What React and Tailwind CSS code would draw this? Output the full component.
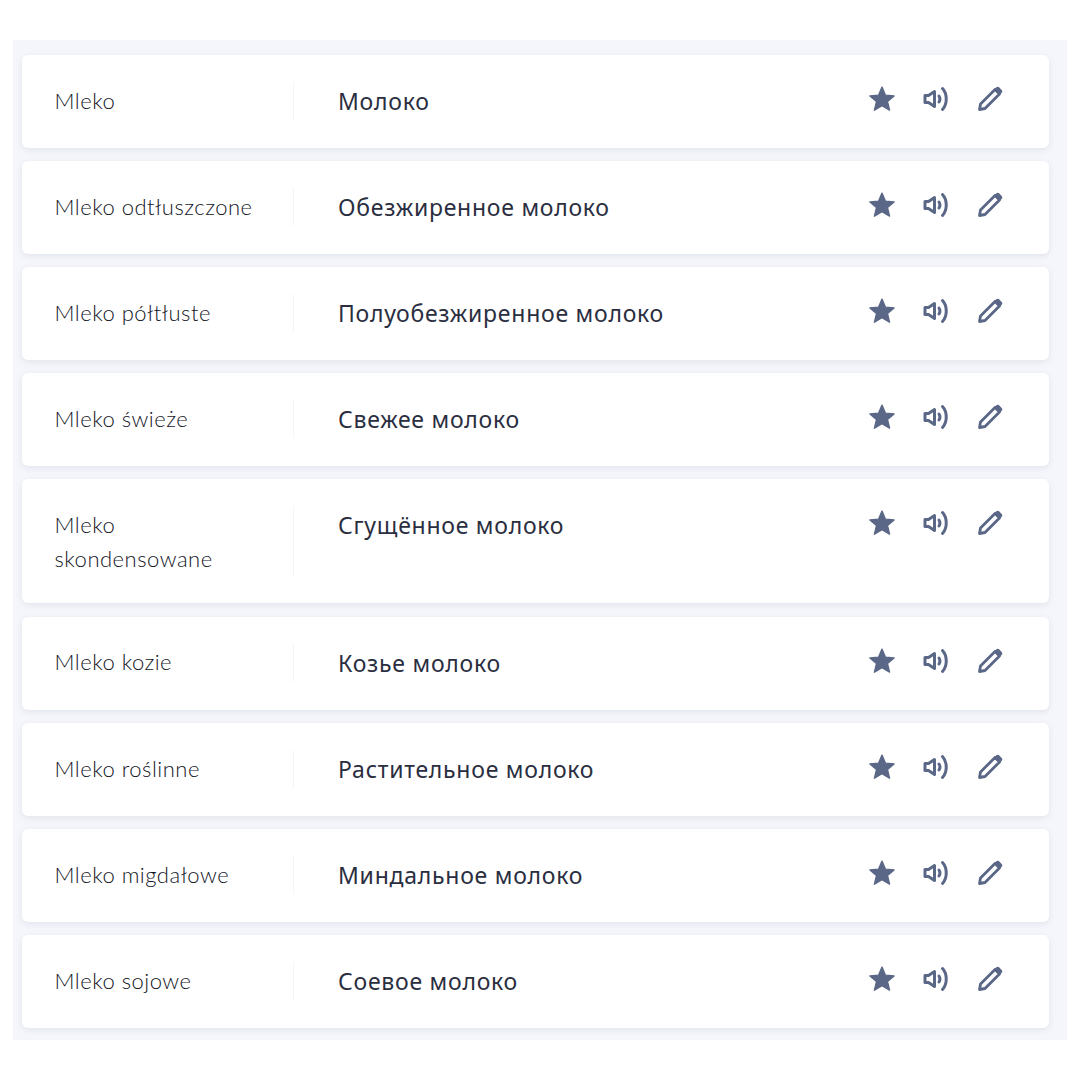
const rows = [
  ['Mleko', 'Молоко'],
  ['Mleko odtłuszczone', 'Обезжиренное молоко'],
  ['Mleko półtłuste', 'Полуобезжиренное молоко'],
  ['Mleko świeże', 'Свежее молоко'],
  ['Mleko skondensowane', 'Сгущённое молоко'],
  ['Mleko kozie', 'Козье молоко'],
  ['Mleko roślinne', 'Растительное молоко'],
  ['Mleko migdałowe', 'Миндальное молоко'],
  ['Mleko sojowe', 'Соевое молоко'],
];

function StarIcon() {
  return (
    <svg width="26" height="26" viewBox="1.5 1.5 23 23" className="text-[#5b6787]">
      <path
        d="M13 2.500l3.100 7.100 7.600.7-5.800 5 1.800 7.600-6.700-4-6.700 4 1.800-7.600-5.800-5 7.600-.7z"
        fill="currentColor"
        stroke="currentColor"
        strokeWidth="1.200"
        strokeLinejoin="round"
      />
    </svg>
  );
}

function SpeakerIcon() {
  return (
    <svg width="26" height="26" viewBox="0 0 26 26" fill="none" className="text-[#5b6787]" stroke="currentColor" strokeWidth="3" strokeLinecap="round" strokeLinejoin="round">
      <path d="M2 9.500h3.500l6-4v15l-6-4H2z" />
      <path d="M16 10c1.300 2 1.300 4 0 6" />
      <path d="M19.500 2.500c5 5.500 5 15.500 0 21" />
    </svg>
  );
}

function PencilIcon() {
  return (
    <svg width="26" height="26" viewBox="0 0 26 26" fill="none" className="text-[#5b6787]">
      <path d="M2.500 23.500l1-5.500L18 3.500l4.500 4.500L8 22.500z" stroke="currentColor" strokeWidth="2.800" strokeLinejoin="round" />
      <path d="M17.500 3l5.500 5.500 1.800-1.800c.8-1 .7-2-.1-2.800l-2.600-2.600c-.8-.8-1.800-.9-2.800-.1z" fill="currentColor" />
    </svg>
  );
}

function Row({ pl, ru }) {
  return (
    <div className="flex rounded-[6px] bg-white pt-[27px] pb-[27.600px] shadow-[0_2px_6px_rgba(91,103,135,0.12)]">
      <div className="min-h-[38px] w-[272px] shrink-0 border-r border-[#f4f5fa] pl-[32.500px] pr-[30px] pt-[1.500px] font-['Lato',sans-serif] text-[22px] font-light leading-[34px] tracking-[0.5px] text-[#14161f]">
        {pl}
      </div>
      <div className="flex-1 pl-[44px] pt-[1px] font-['Noto_Sans',sans-serif] text-[23px] leading-[36px] tracking-[0.75px] text-[#2a2e40]">
        {ru}
      </div>
      <div className="flex h-[34px] gap-[28px] pr-[46px] pt-[4px]">
        <StarIcon />
        <SpeakerIcon />
        <PencilIcon />
      </div>
    </div>
  );
}

export default function App() {
  return (
    <div className="min-h-[1080px] bg-white px-[13px] pt-[40px]">
      <div className="flex h-[1000px] flex-col gap-[13.500px] bg-[#f5f6fb] pb-[12px] pl-[9px] pr-[18px] pt-[15px]">
        {rows.map(([pl, ru]) => (
          <Row key={pl} pl={pl} ru={ru} />
        ))}
      </div>
    </div>
  );
}
